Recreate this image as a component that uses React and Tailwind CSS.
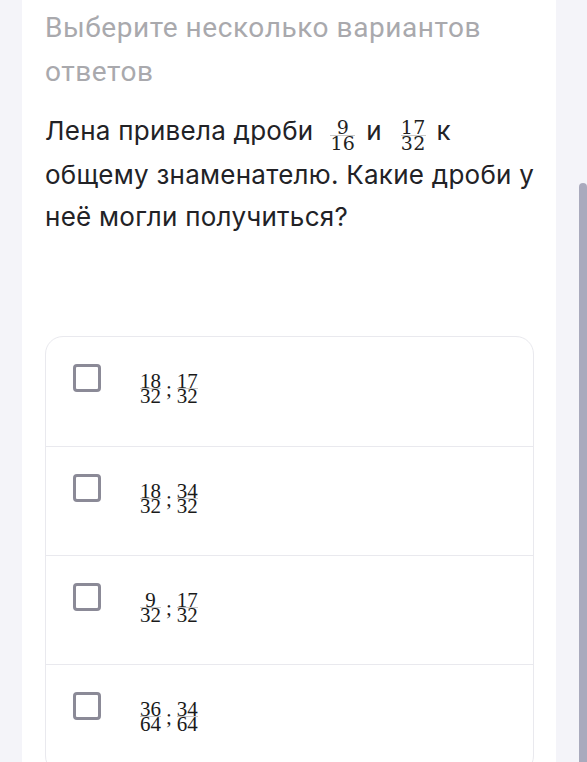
import React from "react";

const Frac = ({ n, d, lh = "leading-[14px]" }) => (
  <span className="inline-flex flex-col items-center align-middle leading-none px-[1px]">
    <span className={lh}>{n}</span>
    <span className="h-px w-full bg-[#222]/25" />
    <span className={lh}>{d}</span>
  </span>
);

const options = [
  [["18", "32"], ["17", "32"]],
  [["18", "32"], ["34", "32"]],
  [["9", "32"], ["17", "32"]],
  [["36", "64"], ["34", "64"]],
];

const serif = { fontFamily: "'DejaVu Serif', 'Liberation Serif', serif" };

export default function App() {
  return (
    <div className="h-[762px] overflow-hidden bg-[#f4f4f9] flex">
      <div className="w-[22px] shrink-0" />
      <div className="w-[534px] shrink-0 bg-white pl-[23px] pr-[8px]">
        <h2
          className="pt-[6px] text-[28px] leading-[44px] tracking-[0.02em] text-[#a9a9ad]"
          style={{ fontFamily: "Roboto, 'Noto Sans', sans-serif" }}
        >
          Выберите несколько вариантов ответов
        </h2>

        <p
          className="mt-[16px] text-[26px] leading-[42px] tracking-[0.01em] text-[#222226]"
          style={{ fontFamily: "Inter, 'Noto Sans', sans-serif" }}
        >
          Лена привела дроби
          <span className="inline-block ml-[16px] mr-[10px] text-[19px] text-[#222]" style={serif}>
            <Frac n="9" d="16" lh="leading-[15px]" />
          </span>
          и
          <span className="inline-block ml-[18px] mr-[10px] text-[19px] text-[#222]" style={serif}>
            <Frac n="17" d="32" lh="leading-[15px]" />
          </span>
          к общему знаменателю. Какие дроби у неё могли получиться?
        </p>

        <div className="mt-[98px] w-[489px] border border-[#e9e9ee] rounded-[18px] bg-white">
          {options.map((opt, i) => (
            <div
              key={i}
              className={`h-[109px] flex items-start pl-[27px] pt-[27px] ${i > 0 ? "border-t border-[#e9e9ee]" : ""}`}
            >
              <div className="w-[28px] h-[28px] border-[3px] border-[#8b8a97] rounded-[4px] shrink-0" />
              <div
                className="ml-[38px] mt-[8px] flex items-center text-[21px] text-[#1a1a1a]"
                style={{ fontFamily: "'Liberation Serif', 'DejaVu Serif', serif" }}
              >
                <Frac n={opt[0][0]} d={opt[0][1]} />
                <span className="mx-[4px] mt-[2px]">;</span>
                <Frac n={opt[1][0]} d={opt[1][1]} />
              </div>
            </div>
          ))}
        </div>
      </div>
      <div className="flex-1 flex justify-end">
        <div className="w-[8px] mt-[183px] h-[700px] bg-[#a9aabd] rounded-t-full" />
      </div>
    </div>
  );
}
